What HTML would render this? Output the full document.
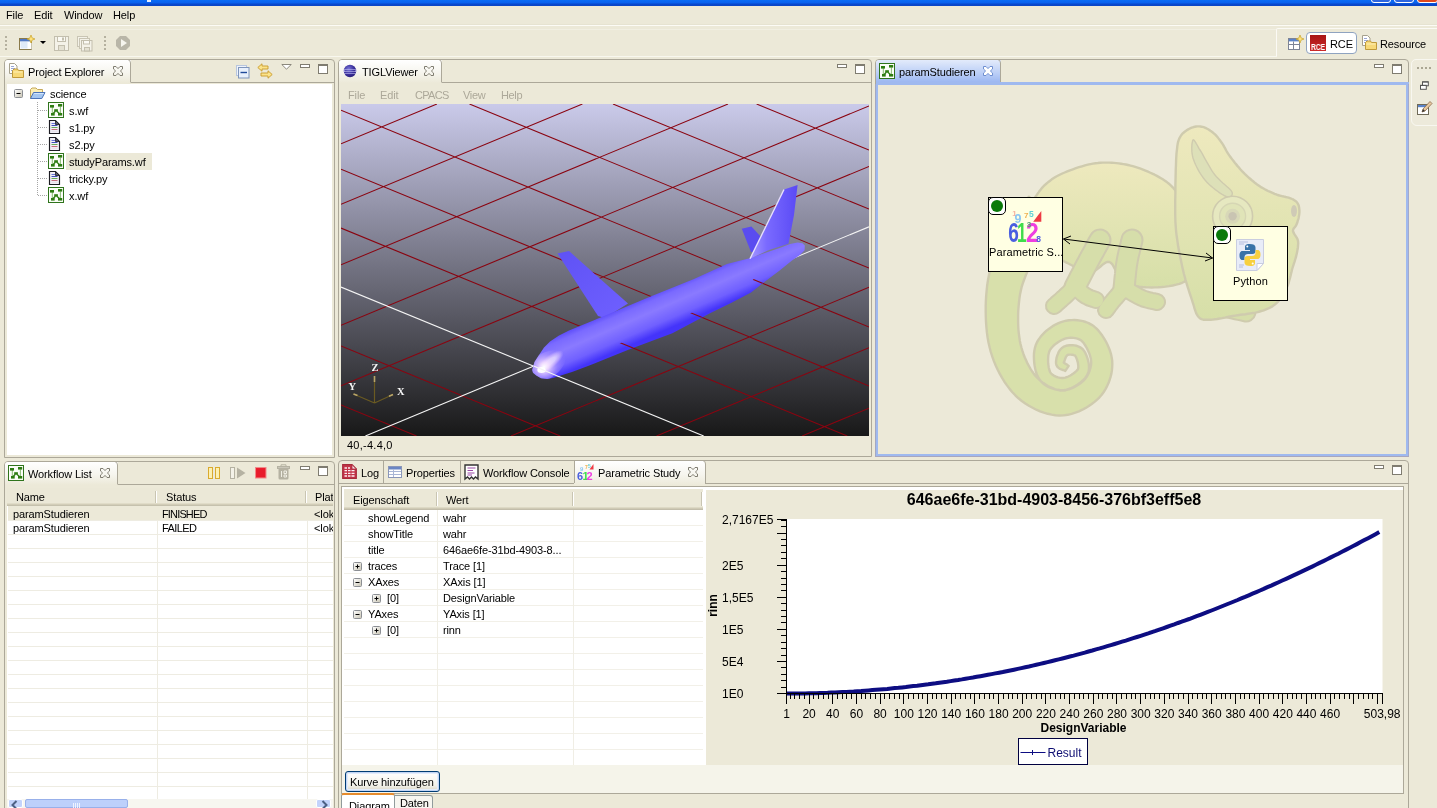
<!DOCTYPE html><html><head><meta charset="utf-8"><title>RCE</title><style>
*{box-sizing:border-box;margin:0;padding:0}
html,body{width:1437px;height:808px;overflow:hidden;background:#ece9d8}
body{position:relative;font-family:"Liberation Sans",sans-serif;font-size:11px;color:#000;letter-spacing:-0.12px}
.a{position:absolute}
.t{position:absolute;white-space:nowrap;line-height:13px;height:13px;will-change:transform}
.dis{color:#aca899}
svg{position:absolute;overflow:visible;will-change:transform}
</style></head><body><div class="a" style="left:0px;top:0px;width:1437px;height:6px;background:linear-gradient(#0a6cf6,#0962ee 45%,#0848cc 70%,#0a45c6);"></div><div class="a" style="left:147px;top:0px;width:4px;height:2px;background:#e8eefc;"></div><div class="a" style="left:1371px;top:-18px;width:20px;height:21px;border:1px solid #fff;border-radius:3px;background:#2d66e0"></div><div class="a" style="left:1394px;top:-18px;width:20px;height:21px;border:1px solid #fff;border-radius:3px;background:#2d66e0"></div><div class="a" style="left:1417px;top:-18px;width:21px;height:21px;border:1px solid #fff;border-radius:3px;background:#e0481e"></div><div class="t " style="left:5.5px;top:9px;">File</div><div class="t " style="left:33.5px;top:9px;">Edit</div><div class="t " style="left:64px;top:9px;">Window</div><div class="t " style="left:113px;top:9px;">Help</div><div class="a" style="left:0px;top:24px;width:1437px;height:1px;background:#e6e3d1;"></div><div class="a" style="left:0px;top:25px;width:1437px;height:1px;background:#fcfbf5;"></div><div class="a" style="left:5px;top:36px;width:2px;height:2px;background:#b5b19f;"></div><div class="a" style="left:5px;top:40px;width:2px;height:2px;background:#b5b19f;"></div><div class="a" style="left:5px;top:44px;width:2px;height:2px;background:#b5b19f;"></div><div class="a" style="left:5px;top:48px;width:2px;height:2px;background:#b5b19f;"></div><div class="a" style="left:104px;top:36px;width:2px;height:2px;background:#b5b19f;"></div><div class="a" style="left:104px;top:40px;width:2px;height:2px;background:#b5b19f;"></div><div class="a" style="left:104px;top:44px;width:2px;height:2px;background:#b5b19f;"></div><div class="a" style="left:104px;top:48px;width:2px;height:2px;background:#b5b19f;"></div><svg style="left:19px;top:35px" width="16" height="16" viewBox="0 0 16 16"><rect x=".5" y="3.5" width="12" height="11" fill="#fff" stroke="#8a7a4a"/><rect x="1" y="4" width="11" height="2.4" fill="#4f78c4"/><rect x="1.5" y="7" width="7" height="6.5" fill="#dfeaf8"/><path d="M12.500 8V14.500" stroke="#c9c4b0"/><path d="M12 0L13.1 2.9L16 4L13.1 5.1L12 8L10.9 5.1L8 4L10.9 2.9Z" fill="#ffe27a" stroke="#c9a227" stroke-width=".7"/></svg><svg style="left:40px;top:41px" width="6" height="3" viewBox="0 0 6 3"><path d="M0 0H6L3 3Z" fill="#000"/></svg><svg style="left:54px;top:36px" width="15" height="15" viewBox="0 0 15 15"><rect x=".5" y=".5" width="14" height="14" fill="#f4f2e8" stroke="#c3bfae"/><rect x="3.5" y=".5" width="8" height="5" fill="#fbfaf4" stroke="#c3bfae"/><rect x="4.5" y="9.5" width="6" height="5" fill="#e4e1d2" stroke="#c3bfae"/><rect x="8" y="1.5" width="2" height="3" fill="#c3bfae"/></svg><svg style="left:77px;top:36px" width="16" height="16" viewBox="0 0 16 16"><rect x=".5" y=".5" width="10" height="10" fill="#f4f2e8" stroke="#c9c5b4"/><rect x="2.5" y="2.5" width="10" height="10" fill="#f4f2e8" stroke="#c9c5b4"/><rect x="4.5" y="4.5" width="10.5" height="10.5" fill="#f4f2e8" stroke="#c3bfae"/><rect x="6.5" y="4.5" width="6" height="3.5" fill="#fbfaf4" stroke="#c3bfae"/><rect x="7.5" y="11.5" width="5" height="3.5" fill="#e4e1d2" stroke="#c3bfae"/></svg><svg style="left:116px;top:36px" width="14" height="14" viewBox="0 0 14 14"><path d="M4 0H10L14 4V10L10 14H4L0 10V4Z" fill="#b9b6a8"/><path d="M5 3L11 7L5 11Z" fill="#f6f5ee"/></svg><div class="a" style="left:1276px;top:28px;width:170px;height:29px;border:1px solid #fbfaf5;border-radius:2px 0 0 0;border-bottom:none"></div><div class="a" style="left:0px;top:56px;width:1277px;height:1px;background:#f8f7ee;"></div><div class="a" style="left:0px;top:29px;width:1276px;height:1px;background:#f1efe2;"></div><svg style="left:1288px;top:35px" width="16" height="16" viewBox="0 0 16 16"><rect x=".5" y="3.5" width="11" height="11" fill="#fff" stroke="#7d8496"/><rect x="1" y="4" width="10" height="2.4" fill="#5b83c9"/><path d="M.5 9.5H11.5M5.5 6.5V14.5" stroke="#7d8496"/><path d="M12 0L13.1 2.9L16 4L13.1 5.1L12 8L10.9 5.1L8 4L10.9 2.9Z" fill="#ffe27a" stroke="#c9a227" stroke-width=".7"/></svg><div class="a" style="left:1306px;top:32px;width:51px;height:22px;border:1px solid #8fa3c0;border-radius:4px;background:#fff"></div><div class="a" style="left:1310px;top:35px;width:16px;height:16px;background:linear-gradient(#a81414,#cc2a2a)"></div><div class="t" style="left:1311px;top:42px;font-size:8.5px;font-weight:bold;color:#fff;letter-spacing:-.2px;line-height:10px;height:10px;transform:scaleX(.8);transform-origin:0 0">RCE</div><div class="t " style="left:1329.5px;top:38px;">RCE</div><svg style="left:1361px;top:35px" width="17" height="16" viewBox="0 0 17 16"><path d="M1.5 .5H6.5L9 3V10.5H1.5Z" fill="#fff" stroke="#a5a08c"/><path d="M3 3.5H6M3 5.5H7M3 7.5H5" stroke="#9aa7d6"/><path d="M4.5 14.5V7.5L6 6H9.5L10.5 7.5H15.5V14.5Z" fill="#f7d978" stroke="#c09a3a"/><path d="M5.5 9H14.5" stroke="#fdf0b8"/></svg><div class="t " style="left:1379.5px;top:38px;">Resource</div><div class="a" style="left:4px;top:59px;width:331px;height:399px;border:1px solid #aca899;border-radius:4px 4px 0 0;background:#ece9d8"></div><div class="a" style="left:5px;top:82px;width:329px;height:1px;background:#aca899;"></div><div class="a" style="left:5px;top:60px;width:126px;height:23px;background:linear-gradient(#ffffff,#f6f5ee 55%,#ece9d8);border-radius:3px 0 0 0"></div><svg style="left:124px;top:59px" width="10" height="24" viewBox="0 0 10 24"><path d="M0 .5H3.5Q6.5 .5 6.5 4V23.5" fill="none" stroke="#aca899"/></svg><svg style="left:8px;top:63px" width="17" height="16" viewBox="0 0 17 16"><path d="M1.5 .5H6.5L9 3V10.5H1.5Z" fill="#fff" stroke="#a5a08c"/><path d="M3 3.5H6M3 5.5H7M3 7.5H5" stroke="#9aa7d6"/><path d="M4.5 14.5V7.5L6 6H9.5L10.5 7.5H15.5V14.5Z" fill="#f7d978" stroke="#c09a3a"/><path d="M5.5 9H14.5" stroke="#fdf0b8"/></svg><div class="t " style="left:27.5px;top:66px;">Project Explorer</div><svg style="left:113px;top:66px" width="10" height="10" viewBox="0 0 10 10"><path d="M.5 .5H3L5 2.6L7 .5H9.5V3L7.4 5L9.5 7V9.5H7L5 7.4L3 9.5H.5V7L2.6 5L.5 3Z" fill="none" stroke="#7f7c70" stroke-width="1"/></svg><svg style="left:236px;top:65px" width="14" height="14" viewBox="0 0 14 14"><rect x=".5" y=".5" width="10" height="10" fill="#eef3fb" stroke="#b8c6de"/><rect x="2.5" y="2.5" width="10.5" height="10.5" fill="#e8f0fc" stroke="#7f95bb"/><path d="M4.5 7.5H11" stroke="#1f4a9a" stroke-width="1.4"/></svg><svg style="left:257px;top:63px" width="16" height="16" viewBox="0 0 16 16"><path d="M5 .8L.8 4.5L5 8.2V6H11V3H5Z" fill="#fbe38a" stroke="#c89a2a" stroke-width=".9"/><path d="M11 7.8L15.2 11.5L11 15.2V13H4V10H11Z" fill="#fbe38a" stroke="#c89a2a" stroke-width=".9"/></svg><svg style="left:281px;top:64px" width="11" height="6" viewBox="0 0 11 6"><path d="M.8 .5H10.2L5.5 5.2Z" fill="#fff" stroke="#7f7c70" stroke-width=".9"/></svg><div class="a" style="left:300px;top:64px;width:10px;height:4px;border:1px solid #7f7c70;background:#fff"></div><div class="a" style="left:318px;top:64px;width:10px;height:10px;border:1px solid #7f7c70;border-top:2px solid #7f7c70;background:#fff"></div><div class="a" style="left:7px;top:84px;width:325px;height:371px;background:#fff;"></div><svg style="left:14px;top:89px" width="9" height="9" viewBox="0 0 9 9"><defs><linearGradient id="pm1489" x1="0" y1="0" x2="1" y2="1"><stop offset="0" stop-color="#fff"/><stop offset="1" stop-color="#c9c5b4"/></linearGradient></defs><rect x=".5" y=".5" width="8" height="8" rx="1" fill="url(#pm1489)" stroke="#8c8f94"/><path d="M2.5 4.5H6.5" stroke="#000"/></svg><svg style="left:29px;top:86px" width="17" height="16" viewBox="0 0 17 16"><path d="M1.500 12.500V3.500L3 2H7L8.500 3.500H13.500V6" fill="#fbeeb4" stroke="#c4a85a"/><path d="M1.500 12.500L4.500 6.500H16L12.800 12.500Z" fill="#a4c6f0" stroke="#4c74b8"/><path d="M5.200 7.500H14.600" stroke="#d4e6fa"/></svg><div class="t " style="left:49.5px;top:88px;">science</div><svg style="left:0;top:0" width="340" height="460"><path d="M37.5 102V195" stroke="#a6a6a6" stroke-dasharray="1 1"/><path d="M38 110.5H47" stroke="#a6a6a6" stroke-dasharray="1 1"/><path d="M38 127.5H47" stroke="#a6a6a6" stroke-dasharray="1 1"/><path d="M38 144.5H47" stroke="#a6a6a6" stroke-dasharray="1 1"/><path d="M38 161.5H47" stroke="#a6a6a6" stroke-dasharray="1 1"/><path d="M38 178.5H47" stroke="#a6a6a6" stroke-dasharray="1 1"/><path d="M38 195.5H47" stroke="#a6a6a6" stroke-dasharray="1 1"/></svg><svg style="left:48px;top:102px" width="16" height="16" viewBox="0 0 16 16"><rect x=".5" y=".5" width="15" height="15" fill="#fbfdf8" stroke="#2f741c"/><path d="M4.300 5V11.500M12.400 4.500V11.500" stroke="#5aa040" stroke-width=".9" fill="none" opacity=".8"/><path d="M7.300 9.200L5.200 11.500M8.800 9.200L11.500 11.500" stroke="#2e7d12" stroke-width="1.300" fill="none"/><rect x="2" y="3" width="4" height="2.600" fill="#2e7d12"/><rect x="10" y="2" width="4.200" height="2.600" fill="#2e7d12"/><rect x="6.200" y="7.200" width="3.700" height="2.500" fill="#2e7d12"/><rect x="3" y="11" width="3.700" height="2.600" fill="#2e7d12"/><rect x="10" y="11" width="4.200" height="2.600" fill="#2e7d12"/></svg><div class="t " style="left:68.5px;top:105px;">s.wf</div><svg style="left:47px;top:119px" width="16" height="16" viewBox="0 0 16 16"><path d="M2.500 1.500H8.500L12.500 5.500V14.500H2.500Z" fill="#f1eff8" stroke="#1c1c22" stroke-width="1.150"/><path d="M8.500 1.500V5.500H12.500Z" fill="#55556a" stroke="#1c1c22" stroke-width=".8"/><path d="M4.500 4.500H8" stroke="#6a74d8"/><path d="M4.500 6.500H10.500" stroke="#3f4fb8"/><path d="M4.500 8.500H10.500" stroke="#6aa858"/><path d="M4.500 10.500H10.500" stroke="#c66a7a"/><path d="M4.500 12.300H10.500" stroke="#e8dfe8"/></svg><div class="t " style="left:68.5px;top:122px;">s1.py</div><svg style="left:47px;top:136px" width="16" height="16" viewBox="0 0 16 16"><path d="M2.500 1.500H8.500L12.500 5.500V14.500H2.500Z" fill="#f1eff8" stroke="#1c1c22" stroke-width="1.150"/><path d="M8.500 1.500V5.500H12.500Z" fill="#55556a" stroke="#1c1c22" stroke-width=".8"/><path d="M4.500 4.500H8" stroke="#6a74d8"/><path d="M4.500 6.500H10.500" stroke="#3f4fb8"/><path d="M4.500 8.500H10.500" stroke="#6aa858"/><path d="M4.500 10.500H10.500" stroke="#c66a7a"/><path d="M4.500 12.300H10.500" stroke="#e8dfe8"/></svg><div class="t " style="left:68.5px;top:139px;">s2.py</div><div class="a" style="left:66px;top:153px;width:86px;height:17px;background:#ece9d8;"></div><svg style="left:48px;top:153px" width="16" height="16" viewBox="0 0 16 16"><rect x=".5" y=".5" width="15" height="15" fill="#fbfdf8" stroke="#2f741c"/><path d="M4.300 5V11.500M12.400 4.500V11.500" stroke="#5aa040" stroke-width=".9" fill="none" opacity=".8"/><path d="M7.300 9.200L5.200 11.500M8.800 9.200L11.500 11.500" stroke="#2e7d12" stroke-width="1.300" fill="none"/><rect x="2" y="3" width="4" height="2.600" fill="#2e7d12"/><rect x="10" y="2" width="4.200" height="2.600" fill="#2e7d12"/><rect x="6.200" y="7.200" width="3.700" height="2.500" fill="#2e7d12"/><rect x="3" y="11" width="3.700" height="2.600" fill="#2e7d12"/><rect x="10" y="11" width="4.200" height="2.600" fill="#2e7d12"/></svg><div class="t " style="left:68.5px;top:156px;">studyParams.wf</div><svg style="left:47px;top:170px" width="16" height="16" viewBox="0 0 16 16"><path d="M2.500 1.500H8.500L12.500 5.500V14.500H2.500Z" fill="#f1eff8" stroke="#1c1c22" stroke-width="1.150"/><path d="M8.500 1.500V5.500H12.500Z" fill="#55556a" stroke="#1c1c22" stroke-width=".8"/><path d="M4.500 4.500H8" stroke="#6a74d8"/><path d="M4.500 6.500H10.500" stroke="#3f4fb8"/><path d="M4.500 8.500H10.500" stroke="#6aa858"/><path d="M4.500 10.500H10.500" stroke="#c66a7a"/><path d="M4.500 12.300H10.500" stroke="#e8dfe8"/></svg><div class="t " style="left:68.5px;top:173px;">tricky.py</div><svg style="left:48px;top:187px" width="16" height="16" viewBox="0 0 16 16"><rect x=".5" y=".5" width="15" height="15" fill="#fbfdf8" stroke="#2f741c"/><path d="M4.300 5V11.500M12.400 4.500V11.500" stroke="#5aa040" stroke-width=".9" fill="none" opacity=".8"/><path d="M7.300 9.200L5.200 11.500M8.800 9.200L11.500 11.500" stroke="#2e7d12" stroke-width="1.300" fill="none"/><rect x="2" y="3" width="4" height="2.600" fill="#2e7d12"/><rect x="10" y="2" width="4.200" height="2.600" fill="#2e7d12"/><rect x="6.200" y="7.200" width="3.700" height="2.500" fill="#2e7d12"/><rect x="3" y="11" width="3.700" height="2.600" fill="#2e7d12"/><rect x="10" y="11" width="4.200" height="2.600" fill="#2e7d12"/></svg><div class="t " style="left:68.5px;top:190px;">x.wf</div><div class="a" style="left:4px;top:461px;width:331px;height:360px;border:1px solid #aca899;border-radius:4px 4px 0 0;background:#ece9d8"></div><div class="a" style="left:5px;top:484px;width:329px;height:1px;background:#aca899;"></div><div class="a" style="left:5px;top:462px;width:113px;height:23px;background:linear-gradient(#ffffff,#f6f5ee 55%,#ece9d8);border-radius:3px 0 0 0"></div><svg style="left:111px;top:461px" width="10" height="24" viewBox="0 0 10 24"><path d="M0 .5H3.5Q6.5 .5 6.5 4V23.5" fill="none" stroke="#aca899"/></svg><svg style="left:8px;top:465px" width="16" height="16" viewBox="0 0 16 16"><rect x=".5" y=".5" width="15" height="15" fill="#fbfdf8" stroke="#2f741c"/><path d="M4.300 5V11.500M12.400 4.500V11.500" stroke="#5aa040" stroke-width=".9" fill="none" opacity=".8"/><path d="M7.300 9.200L5.200 11.500M8.800 9.200L11.500 11.500" stroke="#2e7d12" stroke-width="1.300" fill="none"/><rect x="2" y="3" width="4" height="2.600" fill="#2e7d12"/><rect x="10" y="2" width="4.200" height="2.600" fill="#2e7d12"/><rect x="6.200" y="7.200" width="3.700" height="2.500" fill="#2e7d12"/><rect x="3" y="11" width="3.700" height="2.600" fill="#2e7d12"/><rect x="10" y="11" width="4.200" height="2.600" fill="#2e7d12"/></svg><div class="t " style="left:28px;top:468px;">Workflow List</div><svg style="left:100px;top:468px" width="10" height="10" viewBox="0 0 10 10"><path d="M.5 .5H3L5 2.6L7 .5H9.5V3L7.4 5L9.5 7V9.5H7L5 7.4L3 9.5H.5V7L2.6 5L.5 3Z" fill="none" stroke="#7f7c70" stroke-width="1"/></svg><svg style="left:208px;top:467px" width="13" height="12" viewBox="0 0 13 12"><rect x=".5" y=".5" width="4" height="11" fill="#fdf0b0" stroke="#d9aa2e"/><rect x="7.5" y=".5" width="4" height="11" fill="#fdf0b0" stroke="#d9aa2e"/></svg><svg style="left:230px;top:467px" width="16" height="12" viewBox="0 0 16 12"><rect x=".5" y=".5" width="4" height="11" fill="#f4f2e8" stroke="#b5b2a2"/><path d="M7 .5L15.5 6L7 11.5Z" fill="#b5b2a2"/></svg><svg style="left:255px;top:467px" width="12" height="12" viewBox="0 0 12 12"><rect x=".5" y=".5" width="10.5" height="10.5" fill="#ee2233" stroke="#f08a8a"/><rect x="1.5" y="1.5" width="8.5" height="8.5" fill="#e81c2c"/></svg><svg style="left:277px;top:464px" width="13" height="16" viewBox="0 0 13 16"><path d="M4 2V.8H9V2" fill="none" stroke="#b5b2a2"/><rect x=".5" y="2.5" width="12" height="2" fill="#c9c6b8" stroke="#b5b2a2"/><path d="M1.5 5H11.5V14Q11.5 15.5 10 15.5H3Q1.5 15.5 1.5 14Z" fill="#b5b2a2"/><path d="M4.5 7V13M7 7H9.5V9.5H7ZM7 11H9.5V13H7Z" stroke="#f0eee4" fill="none"/></svg><div class="a" style="left:300px;top:466px;width:10px;height:4px;border:1px solid #7f7c70;background:#fff"></div><div class="a" style="left:318px;top:466px;width:10px;height:10px;border:1px solid #7f7c70;border-top:2px solid #7f7c70;background:#fff"></div><div class="a" style="left:7px;top:506px;width:326px;height:293px;background:#fff;"></div><div class="a" style="left:7px;top:488px;width:326px;height:17px;background:#ebe8d7;"></div><div class="a" style="left:7px;top:503px;width:326px;height:1px;background:#e0dcc8;"></div><div class="a" style="left:7px;top:504px;width:326px;height:1px;background:#d2cdb8;"></div><div class="a" style="left:7px;top:505px;width:326px;height:1px;background:#c5c1ad;"></div><div class="a" style="left:155px;top:491px;width:1px;height:12px;background:#c9c5b2;"></div><div class="a" style="left:156px;top:491px;width:1px;height:12px;background:#fff;"></div><div class="a" style="left:305px;top:491px;width:1px;height:12px;background:#c9c5b2;"></div><div class="a" style="left:306px;top:491px;width:1px;height:12px;background:#fff;"></div><div class="t " style="left:15.5px;top:491px;">Name</div><div class="t " style="left:165.5px;top:491px;">Status</div><div class="a" style="left:8px;top:506px;width:325px;height:14px;background:#ece9d8;"></div><div class="a" style="left:8px;top:520px;width:325px;height:1px;background:#eeece2;"></div><div class="a" style="left:8px;top:534px;width:325px;height:1px;background:#eeece2;"></div><div class="a" style="left:8px;top:548px;width:325px;height:1px;background:#eeece2;"></div><div class="a" style="left:8px;top:562px;width:325px;height:1px;background:#eeece2;"></div><div class="a" style="left:8px;top:576px;width:325px;height:1px;background:#eeece2;"></div><div class="a" style="left:8px;top:590px;width:325px;height:1px;background:#eeece2;"></div><div class="a" style="left:8px;top:604px;width:325px;height:1px;background:#eeece2;"></div><div class="a" style="left:8px;top:618px;width:325px;height:1px;background:#eeece2;"></div><div class="a" style="left:8px;top:632px;width:325px;height:1px;background:#eeece2;"></div><div class="a" style="left:8px;top:646px;width:325px;height:1px;background:#eeece2;"></div><div class="a" style="left:8px;top:660px;width:325px;height:1px;background:#eeece2;"></div><div class="a" style="left:8px;top:674px;width:325px;height:1px;background:#eeece2;"></div><div class="a" style="left:8px;top:688px;width:325px;height:1px;background:#eeece2;"></div><div class="a" style="left:8px;top:702px;width:325px;height:1px;background:#eeece2;"></div><div class="a" style="left:8px;top:716px;width:325px;height:1px;background:#eeece2;"></div><div class="a" style="left:8px;top:730px;width:325px;height:1px;background:#eeece2;"></div><div class="a" style="left:8px;top:744px;width:325px;height:1px;background:#eeece2;"></div><div class="a" style="left:8px;top:758px;width:325px;height:1px;background:#eeece2;"></div><div class="a" style="left:8px;top:772px;width:325px;height:1px;background:#eeece2;"></div><div class="a" style="left:8px;top:786px;width:325px;height:1px;background:#eeece2;"></div><div class="a" style="left:157px;top:520px;width:1px;height:279px;background:#eeece2;"></div><div class="a" style="left:307px;top:520px;width:1px;height:279px;background:#eeece2;"></div><div class="a" style="left:307px;top:488px;width:26px;height:320px;overflow:hidden"><div class="t " style="left:8px;top:3px;">Platform</div><div class="t " style="left:7px;top:20px;">&lt;lokal&gt;</div><div class="t " style="left:7px;top:34px;">&lt;lokal&gt;</div></div><div class="t " style="left:12.5px;top:508px;">paramStudieren</div><div class="t " style="left:161.8px;top:508px;letter-spacing:-.85px">FINISHED</div><div class="t " style="left:12.5px;top:522px;">paramStudieren</div><div class="t " style="left:161.8px;top:522px;letter-spacing:-.6px">FAILED</div><div class="a" style="left:7px;top:799px;width:326px;height:9px;background:#f7f6f0;"></div><div class="a" style="left:8px;top:799px;width:15px;height:9px;background:#c3d3fb;border:1px solid #fff;border-radius:2px"></div><div class="a" style="left:316px;top:799px;width:15px;height:9px;background:#c3d3fb;border:1px solid #fff;border-radius:2px"></div><div class="a" style="left:25px;top:799px;width:103px;height:9px;background:#bdd0fb;border:1px solid #98b0ea;border-radius:2px"></div><svg style="left:11px;top:801px" width="8" height="8" viewBox="0 0 8 8"><path d="M5.5 0L1.5 4L5.5 8" stroke="#4d6185" stroke-width="2" fill="none"/></svg><svg style="left:320px;top:801px" width="8" height="8" viewBox="0 0 8 8"><path d="M2.5 0L6.5 4L2.5 8" stroke="#4d6185" stroke-width="2" fill="none"/></svg><div class="a" style="left:73px;top:803px;width:1px;height:5px;background:#eef3ff;"></div><div class="a" style="left:75px;top:803px;width:1px;height:5px;background:#eef3ff;"></div><div class="a" style="left:77px;top:803px;width:1px;height:5px;background:#eef3ff;"></div><div class="a" style="left:79px;top:803px;width:1px;height:5px;background:#eef3ff;"></div><div class="a" style="left:338px;top:59px;width:534px;height:398px;border:1px solid #aca899;border-radius:4px 4px 0 0;background:#ece9d8"></div><div class="a" style="left:339px;top:82px;width:532px;height:1px;background:#aca899;"></div><div class="a" style="left:339px;top:60px;width:103px;height:23px;background:linear-gradient(#ffffff,#f6f5ee 55%,#ece9d8);border-radius:3px 0 0 0"></div><svg style="left:435px;top:59px" width="10" height="24" viewBox="0 0 10 24"><path d="M0 .5H3.5Q6.5 .5 6.5 4V23.5" fill="none" stroke="#aca899"/></svg><svg style="left:343px;top:64px" width="14" height="14" viewBox="0 0 14 14"><defs><radialGradient id="sph" cx=".4" cy=".35" r=".7"><stop offset="0" stop-color="#7a78d8"/><stop offset=".6" stop-color="#3a2f9c"/><stop offset="1" stop-color="#2a1f78"/></radialGradient></defs><circle cx="7" cy="7" r="6.2" fill="url(#sph)"/><path d="M1 5.5H13M.8 7.5H13.2M1.2 9.5H12.8" stroke="#b9b6ee" stroke-width=".8" opacity=".8"/><path d="M0 7H2M12 7H14" stroke="#c9c6f2" stroke-width="1.5" opacity=".6"/></svg><div class="t " style="left:361.5px;top:66px;">TIGLViewer</div><svg style="left:424px;top:66px" width="10" height="10" viewBox="0 0 10 10"><path d="M.5 .5H3L5 2.6L7 .5H9.5V3L7.4 5L9.5 7V9.5H7L5 7.4L3 9.5H.5V7L2.6 5L.5 3Z" fill="none" stroke="#7f7c70" stroke-width="1"/></svg><div class="a" style="left:837px;top:64px;width:10px;height:4px;border:1px solid #7f7c70;background:#fff"></div><div class="a" style="left:855px;top:64px;width:10px;height:10px;border:1px solid #7f7c70;border-top:2px solid #7f7c70;background:#fff"></div><div class="t dis" style="left:348.3px;top:89px;">File</div><div class="t dis" style="left:380.3px;top:89px;">Edit</div><div class="t dis" style="left:414.7px;top:89px;letter-spacing:-.7px">CPACS</div><div class="t dis" style="left:463.3px;top:89px;letter-spacing:-.35px">View</div><div class="t dis" style="left:500.8px;top:89px;letter-spacing:-.35px">Help</div><div class="t " style="left:346.5px;top:439px;letter-spacing:.25px">40,-4.4,0</div><svg style="left:341px;top:104px;overflow:hidden" width="528" height="332" viewBox="0 0 528 332"><defs>
<linearGradient id="bg3d" x1="0" y1="0" x2="0" y2="1"><stop offset="0" stop-color="#cacaea"/><stop offset=".5" stop-color="#717180"/><stop offset="1" stop-color="#181818"/></linearGradient>
<linearGradient id="fus" gradientUnits="userSpaceOnUse" x1="318" y1="185" x2="334" y2="222"><stop offset="0" stop-color="#5242f8"/><stop offset=".2" stop-color="#7a6aff"/><stop offset=".45" stop-color="#8a7aff"/><stop offset=".78" stop-color="#7060ff"/><stop offset="1" stop-color="#4434fa"/></linearGradient>
<radialGradient id="nose" gradientUnits="userSpaceOnUse" cx="203" cy="263" r="24"><stop offset="0" stop-color="#ffffff"/><stop offset=".2" stop-color="#f3dcff" stop-opacity=".85"/><stop offset=".55" stop-color="#b9a0ff" stop-opacity=".45"/><stop offset="1" stop-color="#8f7dff" stop-opacity="0"/></radialGradient>
<radialGradient id="streak"><stop offset="0" stop-color="#fff" stop-opacity="1"/><stop offset=".35" stop-color="#fff" stop-opacity=".9"/><stop offset=".7" stop-color="#f0d8ff" stop-opacity=".5"/><stop offset="1" stop-color="#c8b0ff" stop-opacity="0"/></radialGradient><linearGradient id="wing" x1="0" y1="0" x2="1" y2="1"><stop offset="0" stop-color="#5f52f5"/><stop offset="1" stop-color="#6f60ff"/></linearGradient>
<linearGradient id="fin" x1="0" y1="0" x2="1" y2="0"><stop offset="0" stop-color="#a598ff"/><stop offset=".35" stop-color="#7a6aff"/><stop offset="1" stop-color="#5a4af5"/></linearGradient>
</defs><rect width="528" height="332" fill="url(#bg3d)"/><path d="M0.0 39.8L95.9 0.0M0.0 100.3L241.4 0.0M0.0 160.8L387.0 0.0M0.0 301.0L75.6 332.0M0.0 221.2L528.0 1.9M0.0 242.0L219.2 332.0M0.0 281.7L528.0 62.4M0.0 124.1L506.3 332.0M170.0 332.0L528.0 183.3M0.0 65.2L528.0 282.0M315.5 332.0L528.0 243.7M0.0 6.2L528.0 223.0M461.1 332.0L528.0 304.2M128.5 0.0L528.0 164.1M272.0 0.0L528.0 105.1M415.6 0.0L528.0 46.1" stroke="#8a0410" stroke-width="1.05" fill="none"/><path d="M0.0 183.1L362.7 332.0M24.4 332.0L528.0 122.8" stroke="#f4f4f4" stroke-width="1.1" fill="none"/><polygon points="400.8,124.8 410.4,122.6 421.0,134.0 415.0,148.0 410.0,148.0" fill="#5a4cf0"/><polygon points="216.5,149.5 228.0,147.0 287.0,199.5 264.0,214.0 257.0,212.0" fill="url(#wing)"/><clipPath id="fusclip"><polygon points="191.2,266.0 193.5,258.0 198.0,251.0 203.0,243.5 209.0,237.5 218.0,231.5 228.0,226.6 260.7,213.0 309.6,192.6 353.0,175.0 386.0,160.0 407.6,154.5 440.0,143.6 449.0,140.0 456.6,138.6 461.5,139.2 463.8,141.5 463.6,146.3 459.0,151.0 451.0,156.5 438.0,167.0 424.0,177.6 410.0,188.5 390.0,199.0 369.5,209.0 331.4,229.3 288.0,245.6 247.0,262.0 231.0,268.0 219.8,271.5 212.0,274.0 206.2,275.0 200.0,274.2 195.3,271.5 192.0,268.8"/></clipPath><polygon points="191.2,266.0 193.5,258.0 198.0,251.0 203.0,243.5 209.0,237.5 218.0,231.5 228.0,226.6 260.7,213.0 309.6,192.6 353.0,175.0 386.0,160.0 407.6,154.5 440.0,143.6 449.0,140.0 456.6,138.6 461.5,139.2 463.8,141.5 463.6,146.3 459.0,151.0 451.0,156.5 438.0,167.0 424.0,177.6 410.0,188.5 390.0,199.0 369.5,209.0 331.4,229.3 288.0,245.6 247.0,262.0 231.0,268.0 219.8,271.5 212.0,274.0 206.2,275.0 200.0,274.2 195.3,271.5 192.0,268.8" fill="url(#fus)"/><clipPath id="lowclip"><polygon points="195.3,271.5 206.2,275.0 219.8,271.5 247.0,262.0 288.0,245.6 331.4,229.3 369.5,209.0 410.0,188.5 424.0,177.6 451.0,156.5 447.5,148.0 420.5,169.1 406.5,180.0 366.0,200.5 327.9,220.8 284.5,237.1 243.5,253.5 216.3,263.0 202.7,266.5 191.8,263.0"/></clipPath><g clip-path="url(#fusclip)"><g clip-path="url(#lowclip)"><path d="M0.0 39.8L95.9 0.0M0.0 100.3L241.4 0.0M0.0 160.8L387.0 0.0M0.0 301.0L75.6 332.0M0.0 221.2L528.0 1.9M0.0 242.0L219.2 332.0M0.0 281.7L528.0 62.4M0.0 124.1L506.3 332.0M170.0 332.0L528.0 183.3M0.0 65.2L528.0 282.0M315.5 332.0L528.0 243.7M0.0 6.2L528.0 223.0M461.1 332.0L528.0 304.2M128.5 0.0L528.0 164.1M272.0 0.0L528.0 105.1M415.6 0.0L528.0 46.1" stroke="#8c0a14" stroke-width="1.1" fill="none"/></g><ellipse cx="209.500" cy="257.500" rx="16" ry="6.500" transform="rotate(-39 209.500 257.500)" fill="url(#streak)"/><ellipse cx="203" cy="263" rx="24" ry="13" transform="rotate(-32 203 263)" fill="url(#nose)"/><ellipse cx="200.500" cy="266" rx="4.200" ry="3" fill="#fff" opacity=".95"/></g><path d="M192.6 262.1L218.2 272.7" stroke="#f4f4f4" stroke-width="1.1"/><polygon points="443.0,85.5 456.6,81.0 453.0,111.0 447.5,139.8 428.0,146.0 409.0,154.8" fill="url(#fin)"/><path d="M443 85.5L409 154.8" stroke="#e8e0ff" stroke-width="1.4"/><g stroke="#6a5a22" stroke-width="1.2" fill="none"><path d="M33.500 299V272M33.500 299L52 290.500M33.500 299L12.500 290"/></g><g stroke="#b8a468" stroke-width="1.6"><path d="M33.500 278V272M48 292.300L52 290.500M16.500 291.600L12.500 290"/></g><g fill="#f6f6f6" font-family="Liberation Serif,serif" font-weight="bold" font-size="10.500" letter-spacing="0"><text x="30.500" y="267">Z</text><text x="56" y="291">X</text><text x="7.500" y="286">Y</text></g></svg><div class="a" style="left:875px;top:59px;width:534px;height:398px;border:1px solid #aca899;border-radius:4px 4px 0 0;background:#ece9d8"></div><div class="a" style="left:876px;top:82px;width:532px;height:1px;background:#aca899;"></div><div class="a" style="left:876px;top:60px;width:125px;height:23px;background:linear-gradient(#e3ebfb,#b9cdf6 60%,#99b5f1);border-radius:3px 0 0 0"></div><svg style="left:994px;top:59px" width="10" height="24" viewBox="0 0 10 24"><path d="M0 .5H3.5Q6.5 .5 6.5 4V23.5" fill="none" stroke="#aca899"/></svg><div class="a" style="left:876px;top:82px;width:533px;height:3px;background:#9fb9ef;"></div><div class="a" style="left:876px;top:85px;width:2px;height:371px;background:#9fb9ef;"></div><div class="a" style="left:1406px;top:85px;width:2px;height:371px;background:#9fb9ef;"></div><div class="a" style="left:876px;top:454px;width:532px;height:2px;background:#9fb9ef;"></div><div class="a" style="left:1408px;top:84px;width:1px;height:373px;background:#a3a9cc;"></div><div class="a" style="left:875px;top:456px;width:534px;height:1px;background:#a8a6be;"></div><div class="a" style="left:875px;top:84px;width:1px;height:373px;background:#a3a7c0;"></div><svg style="left:879px;top:63px" width="16" height="16" viewBox="0 0 16 16"><rect x=".5" y=".5" width="15" height="15" fill="#fbfdf8" stroke="#2f741c"/><path d="M4.300 5V11.500M12.400 4.500V11.500" stroke="#5aa040" stroke-width=".9" fill="none" opacity=".8"/><path d="M7.300 9.200L5.200 11.500M8.800 9.200L11.500 11.500" stroke="#2e7d12" stroke-width="1.300" fill="none"/><rect x="2" y="3" width="4" height="2.600" fill="#2e7d12"/><rect x="10" y="2" width="4.200" height="2.600" fill="#2e7d12"/><rect x="6.200" y="7.200" width="3.700" height="2.500" fill="#2e7d12"/><rect x="3" y="11" width="3.700" height="2.600" fill="#2e7d12"/><rect x="10" y="11" width="4.200" height="2.600" fill="#2e7d12"/></svg><div class="t " style="left:898.5px;top:66px;">paramStudieren</div><svg style="left:983px;top:66px" width="10" height="10" viewBox="0 0 10 10"><path d="M.5 .5H3L5 2.6L7 .5H9.5V3L7.4 5L9.5 7V9.5H7L5 7.4L3 9.5H.5V7L2.6 5L.5 3Z" fill="#fff" stroke="#6f8fd0" stroke-width="1"/></svg><div class="a" style="left:1374px;top:64px;width:10px;height:4px;border:1px solid #7f7c70;background:#fff"></div><div class="a" style="left:1392px;top:64px;width:10px;height:10px;border:1px solid #7f7c70;border-top:2px solid #7f7c70;background:#fff"></div><svg style="left:878px;top:85px;overflow:hidden" width="527" height="369" viewBox="0 0 527 369"><defs><linearGradient id="chg" x1="0" y1="0" x2="0" y2="1"><stop offset="0" stop-color="#eee9be"/><stop offset="1" stop-color="#d6dfa8"/></linearGradient></defs><g stroke="#cfcbae" stroke-width="2.4" stroke-linejoin="round"><path d="M150.8 111.7L149.2 113.9L147.8 115.8L146.1 117.8L144.3 120.0L142.3 122.3L140.2 124.8L137.9 127.5L135.6 130.5L133.2 133.8L130.9 137.4L128.6 141.2L126.6 145.2L124.8 149.1L123.0 153.0L121.3 157.1L119.6 161.4L117.9 165.9L116.3 170.5L114.8 175.2L113.4 180.1L112.1 185.0L111.0 190.0L110.0 195.1L109.2 200.2L108.7 205.2L108.2 210.3L107.9 215.6L107.7 220.9L107.7 226.2L107.8 231.5L108.0 236.9L108.4 242.2L108.9 247.4L109.6 252.5L110.5 257.5L111.6 262.3L112.8 267.0L114.3 271.6L115.9 276.1L117.7 280.5L119.7 284.8L121.8 288.9L124.1 292.9L126.4 296.7L129.0 300.4L131.6 303.9L134.4 307.2L137.3 310.3L140.5 313.3L143.8 316.0L147.3 318.5L150.9 320.8L154.6 322.8L158.3 324.7L162.1 326.3L165.9 327.6L169.8 328.8L173.7 329.6L177.5 330.2L181.5 330.5L185.6 330.4L189.7 329.8L193.6 328.9L197.3 327.7L200.9 326.3L204.4 324.7L207.7 322.9L210.8 321.0L213.7 319.0L216.5 316.9L219.1 314.6L221.5 312.3L223.7 309.7L225.7 307.0L227.5 304.1L229.1 301.1L230.5 298.1L231.6 295.0L232.6 291.8L233.4 288.6L233.9 285.4L234.2 282.2L234.3 279.0L234.2 275.7L233.7 272.4L233.0 269.1L232.0 265.8L230.8 262.7L229.4 259.5L227.9 256.5L226.2 253.6L224.4 250.8L222.5 248.2L220.5 245.7L218.3 243.4L215.9 241.3L213.3 239.6L210.6 238.1L207.8 237.0L204.9 236.1L202.1 235.6L199.3 235.2L196.4 235.0L193.7 235.1L190.9 235.3L188.2 235.7L185.6 236.3L183.1 237.1L180.5 238.1L178.0 239.3L175.6 240.6L173.2 242.2L170.8 243.9L168.5 245.7L166.4 247.7L164.3 249.8L162.4 252.1L160.7 254.4L159.1 257.0L157.9 259.7L157.0 262.6L156.4 265.5L156.0 268.5L155.9 271.5L156.0 274.5L156.2 277.5L156.6 280.5L157.1 283.3L157.8 286.1L158.6 288.7L159.6 291.2L160.9 293.5L162.4 295.7L164.2 297.6L166.1 299.3L168.2 300.7L170.3 301.9L172.5 302.9L174.8 303.7L177.1 304.3L179.4 304.8L181.7 305.0L183.9 305.1L186.2 305.0L188.5 304.6L190.8 303.9L193.1 303.0L195.3 302.0L197.5 300.8L199.7 299.5L201.7 298.1L203.6 296.5L205.4 294.9L207.0 293.2L208.4 291.3L209.6 289.2L210.5 286.9L210.9 284.5L211.0 282.2L210.9 279.9L210.6 277.7L210.1 275.5L209.5 273.4L208.8 271.4L208.0 269.5L207.2 267.7L206.2 266.1L205.0 264.5L203.5 263.1L201.8 262.1L200.0 261.3L198.3 260.7L196.5 260.4L194.8 260.2L193.0 260.2L191.4 260.3L189.7 260.5L188.1 260.8L186.6 261.3L185.1 262.1L183.6 263.2L182.4 264.5L181.4 265.8L180.6 267.2L180.0 268.7L179.4 270.1L178.9 271.6L178.5 273.1L178.3 274.5L178.1 275.9L178.0 277.2L178.1 278.7L178.5 280.2L179.3 281.6L180.3 282.6L181.3 283.4L182.2 284.0L183.2 284.4L184.0 284.7L184.9 285.0L185.6 285.2L186.2 285.4L186.8 285.6L187.3 285.9L190.7 280.9L190.0 280.4L189.2 279.8L188.4 279.3L187.6 278.9L187.0 278.5L186.4 278.1L186.0 277.8L185.7 277.5L185.7 277.4L185.8 277.4L186.0 277.6L186.1 277.7L186.1 277.5L186.2 276.9L186.4 276.1L186.7 275.2L187.0 274.2L187.4 273.2L187.8 272.2L188.3 271.4L188.8 270.7L189.2 270.2L189.4 269.9L189.5 269.9L189.8 269.9L190.3 269.7L191.1 269.6L192.0 269.6L193.0 269.6L193.9 269.7L194.9 269.8L195.7 270.1L196.5 270.3L197.0 270.6L197.3 270.9L197.4 271.1L197.7 271.5L198.1 272.4L198.6 273.5L199.1 274.9L199.5 276.3L199.9 277.8L200.1 279.3L200.3 280.8L200.3 282.1L200.2 283.1L200.0 283.9L199.8 284.4L199.4 284.9L198.6 285.8L197.6 286.7L196.4 287.8L195.0 288.8L193.5 289.8L191.9 290.7L190.3 291.5L188.7 292.1L187.3 292.6L186.0 292.9L185.0 293.0L184.0 293.0L182.8 292.9L181.5 292.7L180.1 292.4L178.7 292.0L177.4 291.4L176.1 290.8L175.0 290.1L174.0 289.3L173.2 288.6L172.6 287.8L172.1 287.1L171.7 286.0L171.3 284.6L170.8 282.8L170.5 280.9L170.2 278.7L170.1 276.5L170.1 274.2L170.2 272.1L170.4 270.0L170.8 268.2L171.2 266.7L171.7 265.5L172.3 264.5L173.2 263.3L174.3 262.0L175.6 260.7L177.0 259.4L178.6 258.2L180.3 257.0L182.0 256.0L183.7 255.0L185.3 254.3L186.8 253.7L188.1 253.3L189.4 253.1L190.9 252.9L192.4 252.8L194.0 252.8L195.6 252.9L197.1 253.1L198.6 253.4L200.0 253.8L201.2 254.3L202.3 254.8L203.2 255.4L203.9 256.1L204.7 256.9L205.7 258.1L206.8 259.7L207.9 261.5L209.0 263.4L210.0 265.5L211.0 267.7L211.8 269.9L212.4 272.0L212.9 273.9L213.1 275.6L213.2 277.1L213.2 278.6L213.0 280.2L212.7 281.9L212.2 283.7L211.7 285.6L211.0 287.4L210.2 289.1L209.3 290.8L208.3 292.4L207.3 293.8L206.2 295.0L205.1 296.1L203.8 297.2L202.2 298.5L200.3 299.7L198.3 300.9L196.2 302.1L194.1 303.1L191.9 304.0L189.7 304.7L187.7 305.2L185.8 305.5L184.1 305.6L182.7 305.5L181.0 305.2L179.1 304.8L176.9 304.1L174.7 303.2L172.4 302.2L170.0 301.0L167.7 299.6L165.4 298.1L163.2 296.4L161.2 294.7L159.4 292.9L157.7 291.1L156.0 289.1L154.4 286.8L152.8 284.3L151.2 281.5L149.6 278.7L148.2 275.6L146.8 272.5L145.5 269.2L144.4 265.9L143.4 262.5L142.5 259.1L141.8 255.7L141.3 252.1L140.8 248.3L140.4 244.3L140.2 240.0L140.1 235.7L140.1 231.2L140.2 226.8L140.5 222.3L140.9 218.0L141.4 213.7L142.0 209.6L142.8 205.8L143.6 202.2L144.7 198.6L146.0 195.0L147.4 191.3L148.9 187.6L150.6 184.0L152.3 180.5L154.1 177.0L156.0 173.7L157.8 170.5L159.7 167.5L161.4 164.8L162.9 162.7L164.4 161.0L165.9 159.4L167.5 157.8L169.2 156.3L171.1 154.7L173.1 153.0L175.3 151.2L177.6 149.3L180.1 147.1L182.7 144.7L185.2 142.3Z" fill="#d8e0ab"/><path d="M158.0 111.0L159.0 109.6L159.9 108.3L160.8 107.1L161.7 105.8L162.6 104.7L163.5 103.5L164.5 102.4L165.6 101.2L166.7 100.1L168.0 99.0L169.3 97.9L170.7 96.8L172.1 95.7L173.5 94.6L175.0 93.6L176.6 92.5L178.3 91.5L180.2 90.5L182.2 89.5L184.3 88.5L186.7 87.5L189.3 86.4L192.0 85.3L194.9 84.3L197.9 83.2L201.0 82.2L204.0 81.3L207.0 80.4L209.8 79.7L212.5 79.1L215.0 78.6L217.5 78.2L219.9 78.0L222.2 77.7L224.5 77.6L226.8 77.6L229.1 77.6L231.4 77.6L233.7 77.7L236.0 77.9L238.3 78.1L240.7 78.4L243.0 78.7L245.4 79.1L247.8 79.5L250.1 80.0L252.5 80.6L254.8 81.2L257.2 81.9L259.5 82.6L261.9 83.4L264.4 84.3L266.8 85.3L269.4 86.4L271.8 87.5L274.3 88.6L276.6 89.7L278.9 90.9L281.0 92.1L283.0 93.2L284.8 94.3L286.5 95.4L288.1 96.5L289.5 97.6L290.9 98.7L292.2 99.9L293.5 101.1L294.7 102.3L295.9 103.6L297.1 105.0L298.2 106.4L299.3 108.0L300.3 109.5L301.3 111.1L302.2 112.8L303.1 114.5L304.0 116.2L304.8 117.9L305.7 119.7L306.5 121.4L307.3 123.1L308.2 124.7L309.0 126.2L309.9 127.8L310.7 129.4L311.4 131.1L312.1 133.0L312.8 135.1L313.4 137.4L314.0 140.0L314.5 143.0L315.1 146.5L315.7 150.3L316.2 154.3L316.6 158.4L317.0 162.6L317.2 166.6L317.3 170.4L317.3 173.9L317.0 177.0L316.6 179.7L316.1 182.3L315.5 184.6L314.8 186.8L314.0 188.7L313.0 190.6L311.7 192.3L310.2 193.8L308.5 195.3L306.5 196.6L304.1 197.8L301.3 198.8L298.1 199.7L294.7 200.5L291.2 201.1L287.5 201.6L283.8 202.0L280.2 202.3L276.8 202.4L273.6 202.5L270.5 202.4L267.4 202.3L264.4 202.0L261.3 201.6L258.3 201.1L255.4 200.5L252.7 199.7L250.1 198.8L247.6 197.8L245.4 196.6L243.4 195.1L241.8 193.1L240.3 190.8L239.0 188.3L237.8 185.8L236.6 183.4L235.4 181.1L234.2 179.2L232.8 177.8L231.3 177.0L229.6 176.9L227.9 177.4L226.2 178.5L224.3 179.9L222.5 181.5L220.6 183.1L218.6 184.6L216.6 185.9L214.6 186.8L212.5 187.2L210.3 187.1L208.1 186.6L205.7 185.9L203.4 185.0L201.0 183.9L198.5 182.7L196.1 181.5L193.7 180.2L191.3 179.0L189.0 177.8L186.7 176.7L184.5 175.5L182.2 174.4L179.9 173.2L177.7 171.9L175.5 170.7L173.3 169.3L171.2 167.9L169.1 166.5L167.0 165.0L164.9 163.4L162.7 161.8L160.5 160.0L158.3 158.3L156.1 156.4L154.1 154.6L152.2 152.7L150.5 150.8L149.1 148.9L148.0 147.0L147.2 145.1L146.6 143.1L146.3 141.0L146.2 139.0L146.2 136.9L146.4 134.8L146.7 132.8L147.1 130.8L147.5 128.8L148.0 127.0L148.6 125.2L149.4 123.5L150.3 121.8L151.3 120.1L152.4 118.5L153.5 116.9L154.7 115.4L155.8 113.9L157.0 112.4Z" fill="url(#chg)"/></g><g fill="none" stroke-linecap="round" stroke-linejoin="round"><path d="M222.0 155.0L220.5 157.7L219.0 160.4L217.5 163.1L216.1 165.8L214.6 168.5L213.1 171.3L211.5 174.1L210.0 177.0L208.4 180.0L206.8 183.0L205.2 186.2L203.6 189.3L201.9 192.5L200.3 195.7L198.6 198.9L197.0 202.0" stroke="#cfcbae" stroke-width="23"/><path d="M197.0 202.0L195.3 203.5L193.6 205.1L191.9 206.7L190.2 208.3L188.5 209.9L186.9 211.4L185.4 212.7L184.0 214.0L182.8 215.1L181.6 216.1L180.6 217.0L179.7 217.8L178.8 218.6L177.9 219.4L177.0 220.2L176.0 221.0" stroke="#cfcbae" stroke-width="18"/><path d="M197.0 202.0L198.4 203.2L199.8 204.4L201.2 205.6L202.6 206.8L203.9 208.0L205.3 209.1L206.7 210.1L208.0 211.0L209.3 211.7L210.6 212.4L211.8 212.9L213.1 213.3L214.3 213.7L215.5 214.1L216.8 214.5L218.0 215.0" stroke="#cfcbae" stroke-width="18"/><path d="M254.0 155.0L253.4 157.7L252.7 160.4L252.0 163.1L251.4 165.8L250.7 168.5L250.1 171.2L249.5 174.1L249.0 177.0L248.5 180.1L248.1 183.2L247.7 186.5L247.4 189.8L247.0 193.1L246.7 196.4L246.4 199.7L246.0 203.0" stroke="#cfcbae" stroke-width="23"/><path d="M246.0 203.0L244.5 204.8L242.9 206.6L241.2 208.5L239.6 210.4L238.1 212.2L236.6 213.9L235.2 215.5L234.0 217.0L233.0 218.3L232.1 219.4L231.3 220.4L230.6 221.4L230.0 222.3L229.4 223.1L228.7 224.0L228.0 225.0" stroke="#cfcbae" stroke-width="18"/><path d="M246.0 203.0L248.3 204.3L250.6 205.6L252.9 207.0L255.2 208.4L257.5 209.7L259.7 210.9L261.9 212.0L264.0 213.0L266.0 213.8L268.0 214.4L269.8 214.9L271.7 215.4L273.5 215.8L275.3 216.1L277.1 216.5L279.0 217.0" stroke="#cfcbae" stroke-width="18"/><path d="M327.0 211.0L329.1 212.3L331.1 213.6L333.1 214.9L335.1 216.2L337.1 217.5L339.3 218.8L341.5 219.9L344.0 221.0L346.7 221.9L349.5 222.8L352.5 223.5L355.6 224.2L358.7 224.9L361.8 225.6L365.0 226.3L368.0 227.0" stroke="#cfcbae" stroke-width="21"/><path d="M222.0 155.0L220.5 157.7L219.0 160.4L217.5 163.1L216.1 165.8L214.6 168.5L213.1 171.3L211.5 174.1L210.0 177.0L208.4 180.0L206.8 183.0L205.2 186.2L203.6 189.3L201.9 192.5L200.3 195.7L198.6 198.9L197.0 202.0" stroke="#d6deaa" stroke-width="19"/><path d="M197.0 202.0L195.3 203.5L193.6 205.1L191.9 206.7L190.2 208.3L188.5 209.9L186.9 211.4L185.4 212.7L184.0 214.0L182.8 215.1L181.6 216.1L180.6 217.0L179.7 217.8L178.8 218.6L177.9 219.4L177.0 220.2L176.0 221.0" stroke="#d6deaa" stroke-width="14"/><path d="M197.0 202.0L198.4 203.2L199.8 204.4L201.2 205.6L202.6 206.8L203.9 208.0L205.3 209.1L206.7 210.1L208.0 211.0L209.3 211.7L210.6 212.4L211.8 212.9L213.1 213.3L214.3 213.7L215.5 214.1L216.8 214.5L218.0 215.0" stroke="#d6deaa" stroke-width="14"/><path d="M254.0 155.0L253.4 157.7L252.7 160.4L252.0 163.1L251.4 165.8L250.7 168.5L250.1 171.2L249.5 174.1L249.0 177.0L248.5 180.1L248.1 183.2L247.7 186.5L247.4 189.8L247.0 193.1L246.7 196.4L246.4 199.7L246.0 203.0" stroke="#d6deaa" stroke-width="19"/><path d="M246.0 203.0L244.5 204.8L242.9 206.6L241.2 208.5L239.6 210.4L238.1 212.2L236.6 213.9L235.2 215.5L234.0 217.0L233.0 218.3L232.1 219.4L231.3 220.4L230.6 221.4L230.0 222.3L229.4 223.1L228.7 224.0L228.0 225.0" stroke="#d6deaa" stroke-width="14"/><path d="M246.0 203.0L248.3 204.3L250.6 205.6L252.9 207.0L255.2 208.4L257.5 209.7L259.7 210.9L261.9 212.0L264.0 213.0L266.0 213.8L268.0 214.4L269.8 214.9L271.7 215.4L273.5 215.8L275.3 216.1L277.1 216.5L279.0 217.0" stroke="#d6deaa" stroke-width="14"/><path d="M327.0 211.0L329.1 212.3L331.1 213.6L333.1 214.9L335.1 216.2L337.1 217.5L339.3 218.8L341.5 219.9L344.0 221.0L346.7 221.9L349.5 222.8L352.5 223.5L355.6 224.2L358.7 224.9L361.8 225.6L365.0 226.3L368.0 227.0" stroke="#d6deaa" stroke-width="17"/></g><path d="M297.4 104.0L297.4 100.0L297.5 95.8L297.6 91.6L297.7 87.4L297.8 83.3L298.0 79.3L298.1 75.5L298.3 71.9L298.5 68.7L298.8 65.8L299.1 63.3L299.3 61.2L299.6 59.4L299.9 57.8L300.2 56.5L300.6 55.3L301.0 54.1L301.5 53.1L302.1 52.0L302.8 50.9L303.6 49.8L304.5 48.7L305.6 47.7L306.7 46.8L307.8 45.9L309.0 45.1L310.2 44.4L311.4 43.8L312.6 43.2L313.7 42.7L314.8 42.3L315.9 42.0L317.0 41.7L318.1 41.5L319.2 41.4L320.2 41.4L321.3 41.4L322.4 41.5L323.5 41.7L324.6 41.9L325.7 42.2L326.8 42.6L328.0 43.1L329.1 43.7L330.2 44.3L331.3 45.0L332.4 45.8L333.5 46.5L334.5 47.3L335.5 48.1L336.4 48.9L337.3 49.7L338.2 50.6L339.0 51.5L339.8 52.4L340.5 53.4L341.3 54.4L342.1 55.5L342.9 56.6L343.7 57.7L344.5 58.9L345.3 60.1L346.0 61.4L346.7 62.7L347.5 64.1L348.2 65.5L349.0 66.9L349.9 68.3L350.9 69.8L351.9 71.3L353.0 72.8L354.2 74.4L355.5 76.1L356.8 77.8L358.2 79.4L359.6 81.1L361.1 82.8L362.5 84.5L364.0 86.1L365.5 87.6L367.0 89.1L368.6 90.6L370.2 92.1L371.8 93.5L373.5 95.0L375.1 96.3L376.8 97.7L378.5 99.0L380.2 100.2L381.8 101.3L383.4 102.4L385.1 103.3L386.8 104.3L388.4 105.1L390.1 106.0L391.7 106.7L393.4 107.4L395.0 108.1L396.6 108.8L398.2 109.4L399.8 110.0L401.4 110.5L403.0 110.9L404.7 111.3L406.2 111.6L407.8 112.0L409.3 112.3L410.7 112.7L411.9 113.1L413.1 113.5L414.1 114.0L415.1 114.4L415.9 114.9L416.7 115.4L417.4 115.9L418.0 116.4L418.6 117.0L419.1 117.6L419.6 118.3L420.0 119.0L420.4 119.8L420.7 120.6L420.9 121.5L421.1 122.4L421.2 123.4L421.3 124.4L421.4 125.4L421.4 126.4L421.4 127.5L421.3 128.5L421.2 129.6L421.0 130.7L420.8 131.8L420.6 133.0L420.3 134.1L419.9 135.3L419.6 136.4L419.3 137.5L418.9 138.5L418.6 139.4L418.2 140.2L417.8 140.9L417.3 141.6L416.8 142.2L416.3 142.8L415.9 143.3L415.5 143.9L415.2 144.5L415.0 145.2L415.0 146.0L415.2 146.8L415.6 147.7L416.1 148.6L416.7 149.6L417.4 150.6L418.0 151.6L418.7 152.7L419.3 153.7L419.7 154.9L420.0 156.0L420.1 157.2L420.2 158.4L420.1 159.7L420.0 161.1L419.9 162.4L419.7 163.8L419.4 165.2L419.2 166.6L418.9 167.9L418.6 169.3L418.3 170.6L418.0 171.9L417.6 173.2L417.2 174.5L416.8 175.8L416.4 177.1L415.9 178.5L415.5 179.9L415.0 181.4L414.5 183.0L414.0 184.7L413.6 186.5L413.1 188.4L412.7 190.3L412.2 192.3L411.6 194.3L411.1 196.3L410.5 198.3L409.8 200.2L409.0 202.0L408.2 203.8L407.3 205.6L406.3 207.4L405.3 209.1L404.3 210.9L403.2 212.6L402.0 214.2L400.8 215.7L399.5 217.1L398.2 218.4L396.8 219.6L395.4 220.6L393.9 221.6L392.4 222.4L390.9 223.2L389.2 223.9L387.5 224.6L385.7 225.3L383.8 225.9L381.8 226.5L379.7 227.1L377.4 227.6L375.0 228.0L372.6 228.4L370.1 228.8L367.5 229.2L364.9 229.5L362.3 229.8L359.8 230.2L357.3 230.6L354.8 231.0L352.2 231.5L349.6 232.0L346.9 232.6L344.3 233.1L341.7 233.5L339.2 234.0L336.9 234.3L334.8 234.6L332.8 234.7L331.1 234.8L329.5 234.8L328.1 234.8L326.8 234.8L325.6 234.7L324.5 234.4L323.5 234.1L322.5 233.6L321.5 232.9L320.6 232.0L319.7 230.9L319.0 229.7L318.3 228.4L317.7 226.9L317.1 225.2L316.5 223.4L316.0 221.5L315.4 219.5L314.7 217.3L314.0 215.0L313.2 212.6L312.3 210.0L311.4 207.3L310.5 204.4L309.5 201.4L308.6 198.3L307.6 195.1L306.7 191.8L305.8 188.5L305.0 185.0L304.2 181.4L303.4 177.7L302.6 173.8L301.7 169.8L301.0 165.7L300.2 161.6L299.6 157.4L299.0 153.2L298.4 149.1L298.0 145.0L297.7 140.9L297.4 136.8L297.3 132.7L297.2 128.5L297.2 124.4L297.2 120.2L297.2 116.1L297.3 112.0L297.4 108.0Z" fill="url(#chg)" stroke="#cfcbae" stroke-width="2.4"/><circle cx="354.5999999999999" cy="131.2" r="20" fill="#e6e8c0" stroke="#cfcbae" stroke-width="1.6"/><circle cx="354.5999999999999" cy="131.2" r="13" fill="#e0e4b8" stroke="#d6d6b4" stroke-width="1.4"/><circle cx="354.5999999999999" cy="131.2" r="7.5" fill="#d8d8b8"/><circle cx="354.5999999999999" cy="131.2" r="4.2" fill="#c9c4b2"/><path d="M315.0 55.0L315.4 54.8L315.8 55.0L316.3 55.5L316.9 56.3L317.6 57.3L318.3 58.6L319.1 60.0L320.0 61.6L320.9 63.3L322.0 65.0L323.2 66.9L324.5 69.2L325.8 71.6L327.3 74.3L328.9 77.1L330.5 79.9L332.1 82.6L333.7 85.3L335.4 87.8L337.0 90.0L338.7 92.1L340.7 94.1L342.7 96.1L344.8 98.0L346.9 99.8L348.8 101.5L350.6 103.1L352.1 104.6L353.3 105.9L354.0 107.0L354.3 108.0L354.3 109.0L354.1 109.8L353.6 110.5L352.8 111.1L351.9 111.5L350.8 111.7L349.6 111.7L348.3 111.5L347.0 111.0L345.5 110.2L343.7 109.2L341.7 107.9L339.6 106.3L337.3 104.6L335.0 102.8L332.8 100.9L330.7 98.9L328.7 96.9L327.0 95.0L325.4 93.0L323.9 90.9L322.4 88.7L321.0 86.4L319.8 84.1L318.6 81.8L317.5 79.5L316.5 77.2L315.7 75.1L315.0 73.0L314.5 70.9L314.1 68.7L313.9 66.4L313.8 64.2L313.8 62.0L313.9 60.0L314.1 58.2L314.4 56.7L314.7 55.6Z" fill="#dde0b8" stroke="#cfcbae" stroke-width="1.4"/><ellipse cx="416" cy="126" rx="3" ry="6" fill="#cfcab6"/></svg><div class="a" style="left:988px;top:197px;width:75px;height:75px;border:1px solid #000;background:#ffffe3;overflow:hidden"></div><div class="a" style="left:988px;top:197px;width:18px;height:18px;border:1px solid #000;border-radius:5px;background:#fff"></div><div class="a" style="left:991px;top:200px;width:12.2px;height:12.2px;border-radius:50%;background:#0b7a0b"></div><div class="a" style="left:1213px;top:226px;width:75px;height:75px;border:1px solid #000;background:#ffffe3;overflow:hidden"></div><div class="a" style="left:1213px;top:226px;width:18px;height:18px;border:1px solid #000;border-radius:5px;background:#fff"></div><div class="a" style="left:1216px;top:229px;width:12.2px;height:12.2px;border-radius:50%;background:#0b7a0b"></div><div class="a" style="left:989px;top:245px;width:74px;height:14px;overflow:hidden"><div class="t " style="left:-0.5px;top:1px;letter-spacing:.12px">Parametric S...</div></div><div class="t " style="left:1232.6px;top:275px;letter-spacing:.1px">Python</div><svg style="left:1008.5px;top:210px" width="33" height="33" viewBox="0 0 33 33"><g font-family="Liberation Sans,sans-serif" font-weight="bold" letter-spacing="0">
<text transform="translate(-.8 32.300) scale(.68 1)" font-size="28" fill="#4a5fe0">6</text><text transform="translate(8 32.300) scale(.62 1)" font-size="28" fill="#3fdc4a">1</text><text transform="translate(17 32.300) scale(.82 1)" font-size="28" fill="#ee3ee0">2</text>
<text x="3.300" y="5.800" font-size="8" fill="#f7b0a0">1</text><text x="5.500" y="13.400" font-size="12.500" fill="#8cc6f2">9</text><text x="15" y="7.800" font-size="8" fill="#f0b050">7</text><text x="20" y="7.200" font-size="8.500" fill="#5fd0d8">5</text><text x="17.800" y="16.700" font-size="8" fill="#4f9f6f">3</text><text x="27.300" y="31.800" font-size="8.500" fill="#5560e0">8</text></g><path d="M32.300 1V11.700H24.200Z" fill="#ee3a44"/></svg><svg style="left:1236px;top:239px" width="28" height="32" viewBox="0 0 28 32"><path d="M.5 .5H27.5V24.5L21 31.5H.5Z" fill="#e8ecf8" stroke="#c9cde0"/><path d="M27.5 24.5H21V31.5Z" fill="#fff" stroke="#c9cde0"/><path d="M3 3H12M3 5H8M3 26H8M3 28H7" stroke="#aab4d8" stroke-width=".8"/>
<path d="M13.5 5C9 5 9 7 9 8.5V11H14V12H6.5C4 12 3.5 14.5 3.5 16.5S4 21 6.5 21H8.5V18C8.5 16 10 15 12 15H16.5C18.5 15 19.5 14 19.5 12V8.5C19.500 6 17.500 5 13.500 5Z" fill="#3872a8"/><circle cx="11.3" cy="7.6" r="1" fill="#fff"/>
<path d="M14.5 27C19 27 19 25 19 23.500V21H14V20H21.500C24 20 24.500 17.500 24.500 15.500S24 11 21.500 11H19.500V14C19.500 16 18 17 16 17H11.500C9.500 17 8.500 18 8.500 20V23.500C8.500 26 10.500 27 14.500 27Z" fill="#f7d03f"/><circle cx="16.7" cy="24.400" r="1" fill="#fff"/></svg><svg style="left:0;top:0" width="1437" height="808"><g stroke="#000" stroke-width="1" fill="none"><path d="M1063.500 239L1212.500 258"/><path d="M1071 236L1063.500 239L1070 244"/><path d="M1206 253L1212.500 258L1205 261"/></g></svg><div class="a" style="left:1411px;top:59px;width:30px;height:67px;border:1px solid #f8f7f0;border-radius:5px 0 0 6px;background:#edeadb"></div><div class="a" style="left:1417px;top:67px;width:2px;height:2px;background:#aaa693;"></div><div class="a" style="left:1421px;top:67px;width:2px;height:2px;background:#aaa693;"></div><div class="a" style="left:1425px;top:67px;width:2px;height:2px;background:#aaa693;"></div><div class="a" style="left:1429px;top:67px;width:2px;height:2px;background:#aaa693;"></div><svg style="left:1420px;top:81px" width="9" height="9" viewBox="0 0 9 9"><rect x="2.500" y=".8" width="5.800" height="4" fill="#fff" stroke="#555" stroke-width="1"/><rect x="2.500" y=".5" width="5.800" height="1" fill="#555"/><rect x=".5" y="4.300" width="5.800" height="4" fill="#fff" stroke="#555" stroke-width="1"/><rect x=".5" y="4" width="5.800" height="1" fill="#555"/></svg><svg style="left:1417px;top:100px" width="16" height="16" viewBox="0 0 16 16"><rect x=".5" y="4.500" width="11" height="10" fill="#fff" stroke="#6f6a58"/><rect x="1" y="5" width="10" height="2.200" fill="#5b83c9"/><path d="M5 12L6 9L13 1.500L15 3.500L8 11Z" fill="#e8c9a0" stroke="#8a6a4a" stroke-width=".8"/><path d="M5 12L6 9L8 11Z" fill="#333"/></svg><div class="a" style="left:338px;top:460px;width:1071px;height:360px;border:1px solid #aca899;border-radius:4px 4px 0 0;background:#ece9d8"></div><div class="a" style="left:339px;top:483px;width:1069px;height:1px;background:#aca899;"></div><div class="a" style="left:383px;top:461px;width:1px;height:22px;background:#aca899;"></div><div class="a" style="left:460px;top:461px;width:1px;height:22px;background:#aca899;"></div><div class="a" style="left:574px;top:461px;width:131px;height:25px;background:linear-gradient(#ffffff,#f6f5ee 55%,#ece9d8)"></div><div class="a" style="left:574px;top:461px;width:1px;height:22px;background:#aca899;"></div><svg style="left:699px;top:460px" width="10" height="27" viewBox="0 0 10 27"><path d="M0 .5H3.500Q6.500 .5 6.500 4V23.500" fill="none" stroke="#aca899"/></svg><svg style="left:342px;top:464px" width="15" height="15" viewBox="0 0 15 15"><path d="M.7 .7H10L14.300 5V14.300H.7Z" fill="#c4364a" stroke="#a82a3a" stroke-width="1.200"/><path d="M10 .7V5H14.300Z" fill="#f6dfe3" stroke="#a82a3a" stroke-width=".8"/><path d="M2.500 4H8M2.500 6.700H12.500M2.500 9.300H12.500M2.500 12H12.500" stroke="#fbeff1" stroke-width="1.300"/><path d="M5.500 3V13M9 6V13" stroke="#c4364a" stroke-width="1"/></svg><div class="t " style="left:361.3px;top:467px;">Log</div><svg style="left:388px;top:466px" width="14" height="12" viewBox="0 0 14 12"><rect x=".5" y=".5" width="13" height="11" fill="#fff" stroke="#8a96b8"/><rect x="1" y="1" width="12" height="2.500" fill="#6b86c4"/><path d="M1 5.500H13M1 8.500H13M5.500 3.500V11" stroke="#a9b6d6"/></svg><div class="t " style="left:406.3px;top:467px;">Properties</div><svg style="left:464px;top:464px" width="15" height="16" viewBox="0 0 15 16"><path d="M1 1H14V15L11.500 13L9.500 15L7.500 13L5.500 15L3.500 13L1 15Z" fill="#fff" stroke="#333" stroke-width="1.400"/><path d="M3.500 4H11.500M3.500 6.500H9M3.500 9H10.500M3.500 11H8" stroke="#9a4aa8" stroke-width="1.200"/></svg><div class="t " style="left:483.3px;top:467px;">Workflow Console</div><svg style="left:577px;top:463px" width="17" height="17" viewBox="0 0 17 17"><g font-family="Liberation Sans,sans-serif" font-weight="bold" letter-spacing="0"><text x="0" y="16.500" font-size="11" fill="#4a5fe0">6</text><text x="5.500" y="16.500" font-size="11" fill="#3fdc4a">1</text><text x="9.500" y="16.500" font-size="11" fill="#ee3ee0">2</text><text x="3" y="8" font-size="6" fill="#8cc6f2">9</text><text x="8" y="6" font-size="5" fill="#f0b050">7</text><text x="11" y="5" font-size="5" fill="#5fd0d8">5</text></g><path d="M16.500 1V6.500H12.500Z" fill="#ee3a44"/></svg><div class="t " style="left:597.5px;top:467px;">Parametric Study</div><svg style="left:688px;top:467px" width="10" height="10" viewBox="0 0 10 10"><path d="M.5 .5H3L5 2.6L7 .5H9.5V3L7.4 5L9.5 7V9.5H7L5 7.4L3 9.5H.5V7L2.6 5L.5 3Z" fill="none" stroke="#7f7c70" stroke-width="1"/></svg><div class="a" style="left:1374px;top:465px;width:10px;height:4px;border:1px solid #7f7c70;background:#fff"></div><div class="a" style="left:1392px;top:465px;width:10px;height:10px;border:1px solid #7f7c70;border-top:2px solid #7f7c70;background:#fff"></div><div class="a" style="left:341px;top:486px;width:1063px;height:308px;border:1px solid #aca899;background:#fff"></div><div class="a" style="left:344px;top:489px;width:359px;height:20px;background:#ebe8d7;"></div><div class="a" style="left:344px;top:507px;width:359px;height:1px;background:#ddd9c5;"></div><div class="a" style="left:344px;top:508px;width:359px;height:1px;background:#cfcab5;"></div><div class="a" style="left:344px;top:509px;width:359px;height:1px;background:#c2bdaa;"></div><div class="a" style="left:436px;top:492px;width:1px;height:14px;background:#c9c5b2;"></div><div class="a" style="left:437px;top:492px;width:1px;height:14px;background:#fff;"></div><div class="a" style="left:572px;top:492px;width:1px;height:14px;background:#c9c5b2;"></div><div class="a" style="left:573px;top:492px;width:1px;height:14px;background:#fff;"></div><div class="a" style="left:701px;top:492px;width:1px;height:14px;background:#c9c5b2;"></div><div class="a" style="left:702px;top:492px;width:1px;height:14px;background:#fff;"></div><div class="t " style="left:353.3px;top:494px;">Eigenschaft</div><div class="t " style="left:446.3px;top:494px;">Wert</div><div class="a" style="left:344px;top:525px;width:359px;height:1px;background:#f2f0e8;"></div><div class="a" style="left:344px;top:541px;width:359px;height:1px;background:#f2f0e8;"></div><div class="a" style="left:344px;top:557px;width:359px;height:1px;background:#f2f0e8;"></div><div class="a" style="left:344px;top:573px;width:359px;height:1px;background:#f2f0e8;"></div><div class="a" style="left:344px;top:589px;width:359px;height:1px;background:#f2f0e8;"></div><div class="a" style="left:344px;top:605px;width:359px;height:1px;background:#f2f0e8;"></div><div class="a" style="left:344px;top:621px;width:359px;height:1px;background:#f2f0e8;"></div><div class="a" style="left:344px;top:637px;width:359px;height:1px;background:#f2f0e8;"></div><div class="a" style="left:344px;top:653px;width:359px;height:1px;background:#f2f0e8;"></div><div class="a" style="left:344px;top:669px;width:359px;height:1px;background:#f2f0e8;"></div><div class="a" style="left:344px;top:685px;width:359px;height:1px;background:#f2f0e8;"></div><div class="a" style="left:344px;top:701px;width:359px;height:1px;background:#f2f0e8;"></div><div class="a" style="left:344px;top:717px;width:359px;height:1px;background:#f2f0e8;"></div><div class="a" style="left:344px;top:733px;width:359px;height:1px;background:#f2f0e8;"></div><div class="a" style="left:344px;top:749px;width:359px;height:1px;background:#f2f0e8;"></div><div class="a" style="left:437px;top:510px;width:1px;height:255px;background:#f0eee5;"></div><div class="a" style="left:573px;top:510px;width:1px;height:255px;background:#f0eee5;"></div><div class="t " style="left:368.3px;top:512px;">showLegend</div><div class="t " style="left:442.5px;top:512px;">wahr</div><div class="t " style="left:368.3px;top:528px;">showTitle</div><div class="t " style="left:442.5px;top:528px;">wahr</div><div class="t " style="left:368.3px;top:544px;">title</div><div class="t " style="left:442.5px;top:544px;">646ae6fe-31bd-4903-8...</div><div class="t " style="left:368.3px;top:560px;">traces</div><div class="t " style="left:442.5px;top:560px;">Trace [1]</div><svg style="left:353px;top:562px" width="9" height="9" viewBox="0 0 9 9"><defs><linearGradient id="pm353562" x1="0" y1="0" x2="1" y2="1"><stop offset="0" stop-color="#fff"/><stop offset="1" stop-color="#c9c5b4"/></linearGradient></defs><rect x=".5" y=".5" width="8" height="8" rx="1" fill="url(#pm353562)" stroke="#8c8f94"/><path d="M2.5 4.5H6.5" stroke="#000"/><path d="M4.5 2.5V6.5" stroke="#000"/></svg><div class="t " style="left:368.3px;top:576px;">XAxes</div><div class="t " style="left:442.5px;top:576px;">XAxis [1]</div><svg style="left:353px;top:578px" width="9" height="9" viewBox="0 0 9 9"><defs><linearGradient id="pm353578" x1="0" y1="0" x2="1" y2="1"><stop offset="0" stop-color="#fff"/><stop offset="1" stop-color="#c9c5b4"/></linearGradient></defs><rect x=".5" y=".5" width="8" height="8" rx="1" fill="url(#pm353578)" stroke="#8c8f94"/><path d="M2.5 4.5H6.5" stroke="#000"/></svg><div class="t " style="left:387.3px;top:592px;">[0]</div><div class="t " style="left:442.5px;top:592px;">DesignVariable</div><svg style="left:372px;top:594px" width="9" height="9" viewBox="0 0 9 9"><defs><linearGradient id="pm372594" x1="0" y1="0" x2="1" y2="1"><stop offset="0" stop-color="#fff"/><stop offset="1" stop-color="#c9c5b4"/></linearGradient></defs><rect x=".5" y=".5" width="8" height="8" rx="1" fill="url(#pm372594)" stroke="#8c8f94"/><path d="M2.5 4.5H6.5" stroke="#000"/><path d="M4.5 2.5V6.5" stroke="#000"/></svg><div class="t " style="left:368.3px;top:608px;">YAxes</div><div class="t " style="left:442.5px;top:608px;">YAxis [1]</div><svg style="left:353px;top:610px" width="9" height="9" viewBox="0 0 9 9"><defs><linearGradient id="pm353610" x1="0" y1="0" x2="1" y2="1"><stop offset="0" stop-color="#fff"/><stop offset="1" stop-color="#c9c5b4"/></linearGradient></defs><rect x=".5" y=".5" width="8" height="8" rx="1" fill="url(#pm353610)" stroke="#8c8f94"/><path d="M2.5 4.5H6.5" stroke="#000"/></svg><div class="t " style="left:387.3px;top:624px;">[0]</div><div class="t " style="left:442.5px;top:624px;">rinn</div><svg style="left:372px;top:626px" width="9" height="9" viewBox="0 0 9 9"><defs><linearGradient id="pm372626" x1="0" y1="0" x2="1" y2="1"><stop offset="0" stop-color="#fff"/><stop offset="1" stop-color="#c9c5b4"/></linearGradient></defs><rect x=".5" y=".5" width="8" height="8" rx="1" fill="url(#pm372626)" stroke="#8c8f94"/><path d="M2.5 4.5H6.5" stroke="#000"/><path d="M4.5 2.5V6.5" stroke="#000"/></svg><div class="a" style="left:706px;top:490px;width:697px;height:275px;background:#ece9d8;"></div><div class="a" style="left:342px;top:765px;width:1061px;height:28px;background:#f5f4ea;"></div><div class="a" style="left:345px;top:771px;width:95px;height:21px;border:1px solid #003c74;border-radius:3px;background:linear-gradient(#fff,#f3f2ea 70%,#d9d5c5);box-shadow:inset 0 0 0 1px #c2d5f4, inset 0 0 0 2px #e3ecfb"></div><div class="t " style="left:350.3px;top:776px;">Kurve hinzufügen</div><div class="a" style="left:341px;top:793px;width:54px;height:20px;background:#fff;border:1px solid #919b9c;border-top:2px solid #e68b2c;border-radius:3px 3px 0 0"></div><div class="a" style="left:395px;top:795px;width:38px;height:20px;background:#f7f6f0;border:1px solid #919b9c;border-left:none;border-radius:0 3px 0 0"></div><div class="t " style="left:348.5px;top:800px;">Diagram</div><div class="t " style="left:399.5px;top:797px;">Daten</div><svg style="left:0;top:0" width="1437" height="808" font-family="Liberation Sans,sans-serif" letter-spacing="0"><rect x="787" y="519" width="595.500" height="174.500" fill="#fff"/><path d="M786.6 693.6L790.3 693.6L794.1 693.6L797.8 693.5L801.5 693.5L805.2 693.4L809.0 693.3L812.7 693.3L816.4 693.2L820.1 693.0L823.9 692.9L827.6 692.8L831.3 692.6L835.1 692.5L838.8 692.3L842.5 692.1L846.2 691.9L850.0 691.7L853.7 691.5L857.4 691.2L861.1 691.0L864.9 690.7L868.6 690.4L872.3 690.1L876.1 689.8L879.8 689.5L883.5 689.2L887.2 688.9L891.0 688.5L894.7 688.1L898.4 687.8L902.2 687.4L905.9 687.0L909.6 686.5L913.3 686.1L917.1 685.7L920.8 685.2L924.5 684.7L928.2 684.3L932.0 683.8L935.7 683.3L939.4 682.7L943.2 682.2L946.9 681.7L950.6 681.1L954.3 680.5L958.1 680.0L961.8 679.4L965.5 678.7L969.2 678.1L973.0 677.5L976.7 676.8L980.4 676.2L984.2 675.5L987.9 674.8L991.6 674.1L995.3 673.4L999.1 672.7L1002.8 672.0L1006.5 671.2L1010.2 670.5L1014.0 669.7L1017.7 668.9L1021.4 668.1L1025.2 667.3L1028.9 666.5L1032.6 665.6L1036.3 664.8L1040.1 663.9L1043.8 663.0L1047.5 662.1L1051.2 661.2L1055.0 660.3L1058.7 659.4L1062.4 658.5L1066.2 657.5L1069.9 656.5L1073.6 655.6L1077.3 654.6L1081.1 653.6L1084.8 652.6L1088.5 651.5L1092.3 650.5L1096.0 649.4L1099.7 648.4L1103.4 647.3L1107.2 646.2L1110.9 645.1L1114.6 644.0L1118.3 642.9L1122.1 641.7L1125.8 640.6L1129.5 639.4L1133.3 638.2L1137.0 637.0L1140.7 635.8L1144.4 634.6L1148.2 633.4L1151.9 632.1L1155.6 630.9L1159.3 629.6L1163.1 628.3L1166.8 627.0L1170.5 625.7L1174.3 624.4L1178.0 623.0L1181.7 621.7L1185.4 620.3L1189.2 619.0L1192.9 617.6L1196.6 616.2L1200.3 614.8L1204.1 613.3L1207.8 611.9L1211.5 610.5L1215.3 609.0L1219.0 607.5L1222.7 606.0L1226.4 604.5L1230.2 603.0L1233.9 601.5L1237.6 600.0L1241.3 598.4L1245.1 596.9L1248.8 595.3L1252.5 593.7L1256.3 592.1L1260.0 590.5L1263.7 588.9L1267.4 587.2L1271.2 585.6L1274.9 583.9L1278.6 582.2L1282.3 580.5L1286.1 578.8L1289.8 577.1L1293.5 575.4L1297.3 573.6L1301.0 571.9L1304.7 570.1L1308.4 568.4L1312.2 566.6L1315.9 564.8L1319.6 562.9L1323.4 561.1L1327.1 559.3L1330.8 557.4L1334.5 555.5L1338.3 553.7L1342.0 551.8L1345.7 549.9L1349.4 547.9L1353.2 546.0L1356.9 544.1L1360.6 542.1L1364.4 540.1L1368.1 538.2L1371.8 536.2L1375.5 534.2L1379.3 532.1" stroke="#0d0d82" stroke-width="4" fill="none" stroke-linecap="butt"/><path d="M786.500 519V694M777 693.500H1382.500M777 693.5H786M781 687.5H786M781 680.5H786M781 674.5H786M781 667.5H786M777 661.5H786M781 655.5H786M781 648.5H786M781 642.5H786M781 635.5H786M777 629.5H786M781 622.5H786M781 616.5H786M781 610.5H786M781 603.5H786M777 597.5H786M781 590.5H786M781 584.5H786M781 578.5H786M781 571.5H786M777 565.5H786M781 558.5H786M781 552.5H786M781 545.5H786M781 539.5H786M777 533.5H786M781 526.5H786M781 520.5H786M777 519.500H786M790.5 694V699M794.5 694V699M799.5 694V699M804.5 694V699M809.5 694V704M813.5 694V699M818.5 694V699M823.5 694V699M828.5 694V699M832.5 694V704M837.5 694V699M842.5 694V699M846.5 694V699M851.5 694V699M856.5 694V704M861.5 694V699M865.5 694V699M870.5 694V699M875.5 694V699M880.5 694V704M884.5 694V699M889.5 694V699M894.5 694V699M899.5 694V699M903.5 694V704M908.5 694V699M913.5 694V699M918.5 694V699M922.5 694V699M927.5 694V704M932.5 694V699M936.5 694V699M941.5 694V699M946.5 694V699M951.5 694V704M955.5 694V699M960.5 694V699M965.5 694V699M970.5 694V699M974.5 694V704M979.5 694V699M984.5 694V699M989.5 694V699M993.5 694V699M998.5 694V704M1003.5 694V699M1008.5 694V699M1012.5 694V699M1017.5 694V699M1022.5 694V704M1026.5 694V699M1031.5 694V699M1036.5 694V699M1041.5 694V699M1045.5 694V704M1050.5 694V699M1055.5 694V699M1060.5 694V699M1064.5 694V699M1069.5 694V704M1074.5 694V699M1079.5 694V699M1083.5 694V699M1088.5 694V699M1093.5 694V704M1098.5 694V699M1102.5 694V699M1107.5 694V699M1112.5 694V699M1116.5 694V704M1121.5 694V699M1126.5 694V699M1131.5 694V699M1135.5 694V699M1140.5 694V704M1145.5 694V699M1150.5 694V699M1154.5 694V699M1159.5 694V699M1164.5 694V704M1169.5 694V699M1173.5 694V699M1178.5 694V699M1183.5 694V699M1188.5 694V704M1192.5 694V699M1197.5 694V699M1202.5 694V699M1206.5 694V699M1211.5 694V704M1216.5 694V699M1221.5 694V699M1225.5 694V699M1230.5 694V699M1235.5 694V704M1240.5 694V699M1244.5 694V699M1249.5 694V699M1254.5 694V699M1259.5 694V704M1263.5 694V699M1268.5 694V699M1273.5 694V699M1278.5 694V699M1282.5 694V704M1287.5 694V699M1292.5 694V699M1296.5 694V699M1301.5 694V699M1306.5 694V704M1311.5 694V699M1315.5 694V699M1320.5 694V699M1325.5 694V699M1330.5 694V704M1334.5 694V699M1339.5 694V699M1344.5 694V699M1349.5 694V699M1353.5 694V704M1358.5 694V699M1363.5 694V699M1368.5 694V699M1372.5 694V699M1377.5 694V704M786.500 694V704M1382.500 694V704" stroke="#000" stroke-width="1" fill="none" shape-rendering="crispEdges"/><g font-size="12" fill="#000"><text x="722" y="523.8">2,7167E5</text><text x="722" y="569.8">2E5</text><text x="722" y="601.9">1,5E5</text><text x="722" y="634.0">1E5</text><text x="722" y="666.1">5E4</text><text x="722" y="698.2">1E0</text><text x="786.6" y="717.500" text-anchor="middle">1</text><text x="809.1" y="717.500" text-anchor="middle">20</text><text x="832.8" y="717.500" text-anchor="middle">40</text><text x="856.5" y="717.500" text-anchor="middle">60</text><text x="880.1" y="717.500" text-anchor="middle">80</text><text x="903.8" y="717.500" text-anchor="middle">100</text><text x="927.5" y="717.500" text-anchor="middle">120</text><text x="951.2" y="717.500" text-anchor="middle">140</text><text x="974.9" y="717.500" text-anchor="middle">160</text><text x="998.6" y="717.500" text-anchor="middle">180</text><text x="1022.2" y="717.500" text-anchor="middle">200</text><text x="1045.9" y="717.500" text-anchor="middle">220</text><text x="1069.6" y="717.500" text-anchor="middle">240</text><text x="1093.3" y="717.500" text-anchor="middle">260</text><text x="1117.0" y="717.500" text-anchor="middle">280</text><text x="1140.7" y="717.500" text-anchor="middle">300</text><text x="1164.3" y="717.500" text-anchor="middle">320</text><text x="1188.0" y="717.500" text-anchor="middle">340</text><text x="1211.7" y="717.500" text-anchor="middle">360</text><text x="1235.4" y="717.500" text-anchor="middle">380</text><text x="1259.1" y="717.500" text-anchor="middle">400</text><text x="1282.8" y="717.500" text-anchor="middle">420</text><text x="1306.4" y="717.500" text-anchor="middle">440</text><text x="1330.1" y="717.500" text-anchor="middle">460</text><text x="1382.2" y="717.500" text-anchor="middle">503,98</text></g><text x="1054" y="505" text-anchor="middle" font-size="16" font-weight="bold">646ae6fe-31bd-4903-8456-376bf3eff5e8</text><text x="1083.500" y="732.400" text-anchor="middle" font-size="12" font-weight="bold">DesignVariable</text><text transform="translate(716.500 605.500) rotate(-90)" text-anchor="middle" font-size="12" font-weight="bold">rinn</text><rect x="1018.500" y="738.500" width="69" height="26" fill="#fff" stroke="#000040"/><path d="M1020.500 752.500H1045.500M1032.500 750V755" stroke="#0d0d82" fill="none"/><text x="1047.500" y="756.700" font-size="12" fill="#0d0d72">Result</text></svg></body></html>
